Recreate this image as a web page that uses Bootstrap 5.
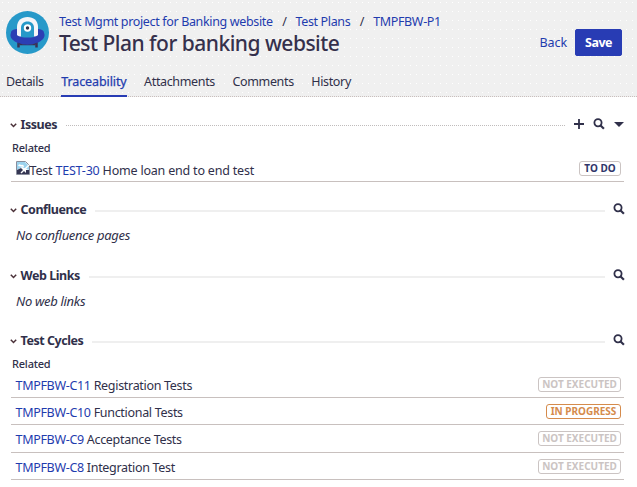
<!DOCTYPE html>
<html lang="en">
<head>
<meta charset="utf-8">
<meta name="viewport" content="width=device-width, initial-scale=1">
<title>Test Plan for banking website</title>
<link href="https://cdn.jsdelivr.net/npm/bootstrap@5.3.0/dist/css/bootstrap.min.css" rel="stylesheet">
<style>
body{font-family:"Noto Sans","Open Sans",sans-serif;font-size:12.5px;line-height:18px;color:#30304a;height:487px;overflow:hidden;white-space:nowrap;letter-spacing:-.31px}
a{color:#1f3cae;text-decoration:none}
.plan-header{height:97px;background:#f0f0f0 radial-gradient(circle at 2.5px 2.5px,#fff .5px,transparent .6px) 0 0/6px 9px;border-bottom:1px dotted #c9bfbd}
.plan-top{height:67px;padding:11px 15px 0 6px}
.plan-names{padding-left:10px}
.crumbs{height:20px;line-height:22px;letter-spacing:-.35px}
.crumbs .sep{margin:0 9px 0 9.5px}
.plan-title{font-size:21px;line-height:25px;font-weight:500;margin:0;letter-spacing:-.51px;color:#35304c}
.save-btn{--bs-btn-bg:#283cb4;--bs-btn-border-color:#283cb4;--bs-btn-color:#fff;--bs-btn-border-radius:2px;--bs-btn-padding-x:0;--bs-btn-padding-y:0;width:47px;height:27px;font-size:12.5px;font-weight:700;line-height:25px;letter-spacing:-.5px}
.plan-actions{padding-top:18px}
.back-link{padding-top:5px;letter-spacing:-.1px}
.plan-tabs{height:30px;padding-left:6px;gap:17.5px}
.plan-tabs .nav-link{padding:6px 0 0;color:#30304a;height:30px;line-height:18px;letter-spacing:-.35px}
.plan-tabs .nav-link.active{color:#1f3cae;border-bottom:2px solid #283cb4;-webkit-text-stroke:.25px;letter-spacing:-.1px}
.sect-head{height:20px;padding-left:10px;padding-right:12px}
.sect-head h2{font-size:12.5px;line-height:20px;font-weight:700;margin:0 0 0 3.5px;letter-spacing:-.45px}
.tool{margin-bottom:3px}
.rule{height:0;border-top:1px dotted #c0bcbc;margin:1px 8px 0 9px}
.rule.soft{border-top:2px solid #efefef}
.related{font-size:11px;line-height:16px;padding-left:12px;margin-top:5px;font-weight:500;letter-spacing:-.2px}
.item-row{margin:0 13px 0 11px;padding:0 3px 0 4.500px;border-bottom:1px solid #c8c0be}
.item-label{padding-top:3px}
.issue-label{padding-top:5px;letter-spacing:-.2px}
.status{font-size:10px;font-weight:700;line-height:13px;height:15px;border:1px solid #cbc4c3;border-radius:3px;text-align:center;letter-spacing:0}
.todo{width:42px;color:#30366a}
.notrun{width:83px;color:#cbc4c3}
.running{width:75px;color:#d58b4c;border-color:#d58b4c}
.empty-note{font-size:13px;font-style:italic;padding-left:16px;line-height:18px;margin-top:6px}
.sect{padding-top:16px;height:66px}
.sect-first{padding-top:18px;height:87px}
.sect-links{height:65px}
.h26{height:26px}.h27{height:27px}.h28{height:28px}
svg{display:block;flex:none}
</style>
<script src="https://cdn.jsdelivr.net/npm/bootstrap@5.3.0/dist/js/bootstrap.bundle.min.js"></script>
</head>
<body>
<svg width="0" height="0" class="position-absolute">
<symbol id="chev" viewBox="0 0 7 6"><path d="M.8 1.800 3.500 4.500 6.200 1.800" fill="none" stroke="#4a3038" stroke-width="1.500"/></symbol>
<symbol id="find" viewBox="0 0 12 12"><circle cx="5" cy="4.800" r="3.600" fill="none" stroke="#30304a" stroke-width="1.800"/><path d="m7.600 7.500 3.300 3.200" stroke="#30304a" stroke-width="2.200"/></symbol>
</svg>
<header class="plan-header">
<div class="plan-top d-flex">
<svg width="43" height="43" viewBox="0 0 43 43"><circle cx="21.500" cy="21.500" r="21.500" fill="#2799c9"/>
<path d="M12.500 31v5.500M30.500 31v5.500" stroke="#3b3153" stroke-width="2.500"/>
<path d="M5 22c0-3 3-4 7-4h19c4 0 7 1 7 4 3 6-7 12-16.500 12S2 28 5 22z" fill="#2b3fb4"/>
<path d="M12 31.500c5 3 14 3 19 0l-2 2.800H14z" fill="#3b3153"/>
<path d="M11 24v-8c0-6.500 4.500-10 10.500-10S32 9.500 32 16v8c-1 1-3 1.500-4.500 1.500h-12C14 25.500 12 25 11 24z" fill="#f5f5f8"/>
<path d="M15 26V17c0-4 2.500-6.500 6.500-6.500S28 13 28 17v9c-4 .8-9 .8-13 0z" fill="#2799c9"/>
<circle cx="21.500" cy="17" r="3.700" fill="#fff"/><circle cx="21.500" cy="17" r="1.700" fill="#30304a"/></svg>
<div class="plan-names flex-grow-1">
<nav class="crumbs d-flex"><a href="#">Test Mgmt project for Banking website</a><span class="sep">/</span><a href="#">Test Plans</a><span class="sep">/</span><a href="#">TMPFBW-P1</a></nav>
<h1 class="plan-title">Test Plan for banking website</h1>
</div>
<div class="plan-actions d-flex align-items-start gap-2"><a href="#" class="back-link">Back</a><button class="btn save-btn">Save</button></div>
</div>
<nav class="nav plan-tabs flex-nowrap"><a class="nav-link" href="#">Details</a><a class="nav-link active" href="#">Traceability</a><a class="nav-link" href="#">Attachments</a><a class="nav-link" href="#">Comments</a><a class="nav-link" href="#">History</a></nav>
</header>
<main>
<section class="sect-first">
<div class="sect-head d-flex align-items-center"><svg width="7" height="6"><use href="#chev"/></svg><h2>Issues</h2><div class="rule flex-grow-1"></div>
<svg class="tool" width="12" height="12" viewBox="0 0 12 12"><path d="M6 1v10M1 6h10" stroke="#30304a" stroke-width="1.800"/></svg><svg width="12" height="12" class="tool ms-2"><use href="#find"/></svg><svg width="12" height="8" class="tool ms-2" viewBox="0 0 12 8"><path d="M1 2h10L6 7z" fill="#30304a"/></svg></div>
<div class="related">Related</div>
<div class="item-row d-flex align-items-center justify-content-between h26"><div class="d-flex align-items-center"><svg width="14" height="15" viewBox="0 0 14 15"><path d="M.5.500h9l4 4v9H.5z" fill="#fff" stroke="#8a8e9c"/><path d="M1 1h8l4 4v4L6 6 1 9z" fill="#9bd3ee"/><path d="M2 5q1-3 3-1 3-1 3 2z" fill="#fff"/><path d="m1 13 0-4 4-2 6 6z" fill="#353653"/><path d="m5 12 8-8" stroke="#fff" stroke-width="1.500"/><path d="M10 9h3v4h-3z" fill="#353653"/></svg><span class="issue-label">Test <a href="#">TEST-30</a> Home loan end to end test</span></div><span class="status todo">TO DO</span></div>
</section>
<section class="sect"><div class="sect-head d-flex align-items-center"><svg width="7" height="6"><use href="#chev"/></svg><h2>Confluence</h2><div class="rule soft flex-grow-1"></div><svg class="tool" width="12" height="12"><use href="#find"/></svg></div><div class="empty-note">No confluence pages</div></section>
<section class="sect sect-links"><div class="sect-head d-flex align-items-center"><svg width="7" height="6"><use href="#chev"/></svg><h2>Web Links</h2><div class="rule soft flex-grow-1"></div><svg class="tool" width="12" height="12"><use href="#find"/></svg></div><div class="empty-note">No web links</div></section>
<section class="pt-3"><div class="sect-head d-flex align-items-center"><svg width="7" height="6"><use href="#chev"/></svg><h2>Test Cycles</h2><div class="rule soft flex-grow-1"></div><svg class="tool" width="12" height="12"><use href="#find"/></svg></div>
<div class="related">Related</div>
<div class="item-row d-flex align-items-center justify-content-between h26"><span class="item-label"><a href="#">TMPFBW-C11</a> Registration Tests</span><span class="status notrun">NOT EXECUTED</span></div>
<div class="item-row d-flex align-items-center justify-content-between h27"><span class="item-label"><a href="#">TMPFBW-C10</a> Functional Tests</span><span class="status running">IN PROGRESS</span></div>
<div class="item-row d-flex align-items-center justify-content-between h28"><span class="item-label"><a href="#">TMPFBW-C9</a> Acceptance Tests</span><span class="status notrun">NOT EXECUTED</span></div>
<div class="item-row d-flex align-items-center justify-content-between h27"><span class="item-label"><a href="#">TMPFBW-C8</a> Integration Test</span><span class="status notrun">NOT EXECUTED</span></div>
</section>
</main>
</body>
</html>
